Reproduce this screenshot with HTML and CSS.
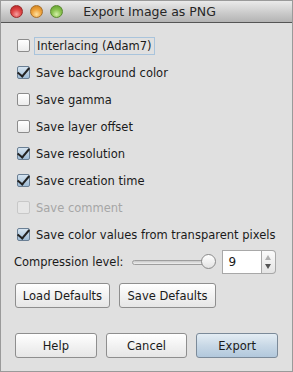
FILE: index.html
```html
<!DOCTYPE html>
<html lang="en">
<head>
    <meta charset="UTF-8">
    <title>Export Image as PNG</title>
    <link rel="stylesheet" href="styles.css">
</head>
<body>
    <div class="window">
        <div class="titlebar">
            <div class="lights">
                <span class="light red"></span>
                <span class="light yellow"></span>
                <span class="light green"></span>
            </div>
            <div class="title">Export Image as PNG</div>
        </div>

        <div class="content">
            <label class="option focused"><span class="check"></span><span class="text">Interlacing (Adam7)</span></label>
            <label class="option"><span class="check on"></span><span class="text">Save background color</span></label>
            <label class="option"><span class="check"></span><span class="text">Save gamma</span></label>
            <label class="option"><span class="check"></span><span class="text">Save layer offset</span></label>
            <label class="option"><span class="check on"></span><span class="text">Save resolution</span></label>
            <label class="option"><span class="check on"></span><span class="text">Save creation time</span></label>
            <label class="option disabled"><span class="check"></span><span class="text">Save comment</span></label>
            <label class="option"><span class="check on"></span><span class="text">Save color values from transparent pixels</span></label>

            <div class="compression">
                <span class="text">Compression level:</span>
                <div class="slider">
                    <div class="track"></div>
                    <div class="thumb"></div>
                </div>
                <div class="spinner">
                    <div class="field">9</div>
                    <div class="stepper">
                        <span class="arrow up"></span>
                        <span class="arrow down"></span>
                    </div>
                </div>
            </div>

            <div class="defaults">
                <button class="btn load">Load Defaults</button>
                <button class="btn save">Save Defaults</button>
            </div>

            <div class="actions">
                <button class="btn">Help</button>
                <button class="btn">Cancel</button>
                <button class="btn primary">Export</button>
            </div>
        </div>
    </div>
</body>
</html>
```

FILE: styles.css
```css
body {
    margin: 0;
    font-family: "DejaVu Sans", "Liberation Sans", sans-serif;
    font-size: 11.5px;
    color: #1a1a1a;
    background-color: #ffffff;
}
.window {
    width: 291px;
    height: 370px;
    border: 1px solid #9a9a9a;
    background-color: #e0e0e0;
    display: flex;
    flex-direction: column;
}
.titlebar {
    height: 21px;
    border-bottom: 1px solid #555;
    background: linear-gradient(#eaeaea, #c9c9c9 60%, #b4b4b4);
    position: relative;
    display: flex;
    align-items: center;
    justify-content: center;
}
.lights {
    position: absolute;
    left: 9px;
    top: 4px;
    display: flex;
    gap: 7px;
}
.light {
    width: 13px;
    height: 13px;
    border-radius: 50%;
    box-sizing: border-box;
}
.red {
    background: radial-gradient(circle at 50% 75%, #f6a0a0 0, #e04848 45%, #b21e1e 100%);
    border: 1px solid #9a2a2a;
}
.yellow {
    background: radial-gradient(circle at 50% 75%, #fde1a0 0, #f0a640 45%, #c97a14 100%);
    border: 1px solid #a8702a;
}
.green {
    background: radial-gradient(circle at 50% 75%, #d4f0a8 0, #8cc452 45%, #5c9a28 100%);
    border: 1px solid #5a8a30;
}
.title {
    font-size: 12.5px;
    color: #262626;
    margin-left: 6px;
}
.content {
    flex: 1;
    padding: 9px 14px 0 16px;
    display: flex;
    flex-direction: column;
}
.option {
    height: 27px;
    display: flex;
    align-items: center;
    gap: 6px;
    white-space: nowrap;
}
.check {
    flex: none;
    width: 13px;
    height: 13px;
    box-sizing: border-box;
    border: 1px solid #8c8c8c;
    border-radius: 2px;
    background: linear-gradient(#ffffff, #ececec);
    position: relative;
}
.check.on {
    background: linear-gradient(#d6e4f0, #9fbcd6);
    border-color: #6a7f94;
}
.check.on::after {
    content: "";
    position: absolute;
    left: 2px;
    top: -2px;
    width: 5px;
    height: 10px;
    border-right: 2.5px solid #222;
    border-bottom: 2.5px solid #222;
    transform: rotate(40deg);
}
.focused .text {
    margin-left: -2px;
    padding: 1px 2px;
    border: 1px solid #a9c4dc;
}
.disabled .check {
    border-color: #c8c8c8;
    background: #e6e6e6;
}
.disabled .text {
    color: #a6a6a6;
}
.compression {
    margin-top: 2px;
    height: 24px;
    display: flex;
    align-items: center;
    margin-left: -3px;
    white-space: nowrap;
}
.slider {
    position: relative;
    width: 84px;
    height: 16px;
    margin-left: 8px;
}
.track {
    position: absolute;
    left: 0;
    right: 4px;
    top: 6px;
    height: 3px;
    border: 1px solid #9e9e9e;
    border-radius: 3px;
    background: linear-gradient(#c8c8c8, #f0f0f0);
}
.thumb {
    position: absolute;
    right: 0;
    top: 0;
    width: 15px;
    height: 15px;
    box-sizing: border-box;
    border-radius: 50%;
    border: 1px solid #8a8a8a;
    background: linear-gradient(#ffffff, #e2e2e2);
}
.spinner {
    margin-left: 6px;
    display: flex;
    height: 24px;
}
.field {
    width: 40px;
    box-sizing: border-box;
    border: 1px solid #a8a8a8;
    background-color: #ffffff;
    padding: 4px 0 0 6px;
    font-size: 12px;
}
.stepper {
    width: 14px;
    box-sizing: border-box;
    border: 1px solid #a8a8a8;
    border-left: none;
    border-radius: 0 4px 4px 0;
    background: linear-gradient(#fbfbfb, #e4e4e4);
    display: flex;
    flex-direction: column;
    align-items: center;
    justify-content: center;
    gap: 4px;
}
.arrow {
    width: 0;
    height: 0;
    border-left: 3px solid transparent;
    border-right: 3px solid transparent;
}
.arrow.up {
    border-bottom: 5px solid #b0b0b0;
}
.arrow.down {
    border-top: 5px solid #555;
}
.defaults {
    margin-top: 9px;
    margin-left: -2px;
    display: flex;
    gap: 9px;
}
.btn {
    font-family: "DejaVu Sans", "Liberation Sans", sans-serif;
    font-size: 11.5px;
    color: #1a1a1a;
    height: 25px;
    width: 82px;
    border: 1px solid #8e8e8e;
    border-radius: 3px;
    background: linear-gradient(#ffffff, #f2f2f2 50%, #e6e6e6);
    padding: 0;
    white-space: nowrap;
}
.btn.load {
    width: 95px;
}
.btn.save {
    width: 97px;
}
.btn.primary {
    background: linear-gradient(#e4edf4, #c8d8e6 50%, #b2c8dc);
    border-color: #7b8a99;
}
.actions {
    margin-top: 25px;
    margin-left: -2px;
    display: flex;
    gap: 9px;
}
```
